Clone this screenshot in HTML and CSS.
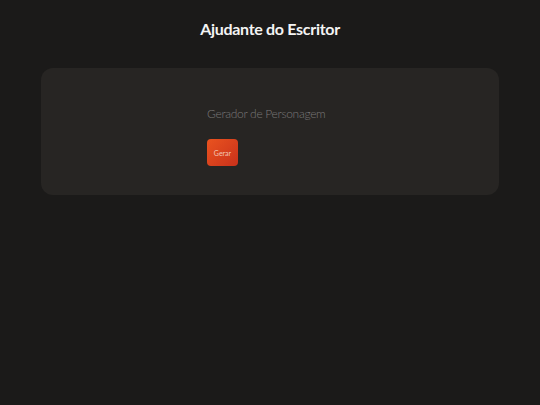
FILE: index.html
```html
<!DOCTYPE html>
<html lang="pt">

<head>
    <meta charset="UTF-8">
    <meta name="viewport" content="width=device-width, initial-scale=1.0">
    <title>Ajudante do Escritor</title>
    <link rel="stylesheet" href="styles.css">
</head>

<body>
    <header class="top-bar">
        <h1 class="title">Ajudante do Escritor</h1>
    </header>
    <main class="page">
        <section class="card">
            <div class="card-inner">
                <h2 class="card-title">Gerador de Personagem</h2>
                <button class="btn-gerar" id="gerar-button">Gerar</button>
            </div>
        </section>
    </main>
</body>

</html>
```

FILE: styles.css
```css
:root {
    --bg: #1b1a19;
    --card-bg: #272523;
    --text: #f4f4f4;
    --muted: #7a7878;
}

body {
    margin: 0;
    padding: 0;
    min-height: 100vh;
    background-color: var(--bg);
    font-family: Lato, "Open Sans", sans-serif;
    color: var(--text);
}

.top-bar {
    display: flex;
    justify-content: center;
    padding-top: 17px;
}

.title {
    margin: 0;
    font-size: 16px;
    font-weight: 700;
    line-height: 24px;
    letter-spacing: -0.3px;
}

.page {
    padding: 27px 41px 0 41px;
}

.card {
    display: flex;
    justify-content: center;
    height: 127px;
    background-color: var(--card-bg);
    border-radius: 12px;
}

.card-inner {
    display: flex;
    flex-direction: column;
    align-items: flex-start;
    width: 126px;
    padding-top: 37px;
}

.card-title {
    margin: 0;
    font-size: 12px;
    font-weight: 300;
    line-height: 17px;
    letter-spacing: -0.3px;
    color: var(--muted);
    white-space: nowrap;
}

.btn-gerar {
    margin-top: 17px;
    width: 31px;
    height: 27px;
    padding: 0;
    border: none;
    border-radius: 4px;
    background: linear-gradient(135deg, #ea531f 0%, #c8311b 100%);
    color: #f3c6b6;
    font-family: inherit;
    font-size: 7px;
    cursor: pointer;
}
```
